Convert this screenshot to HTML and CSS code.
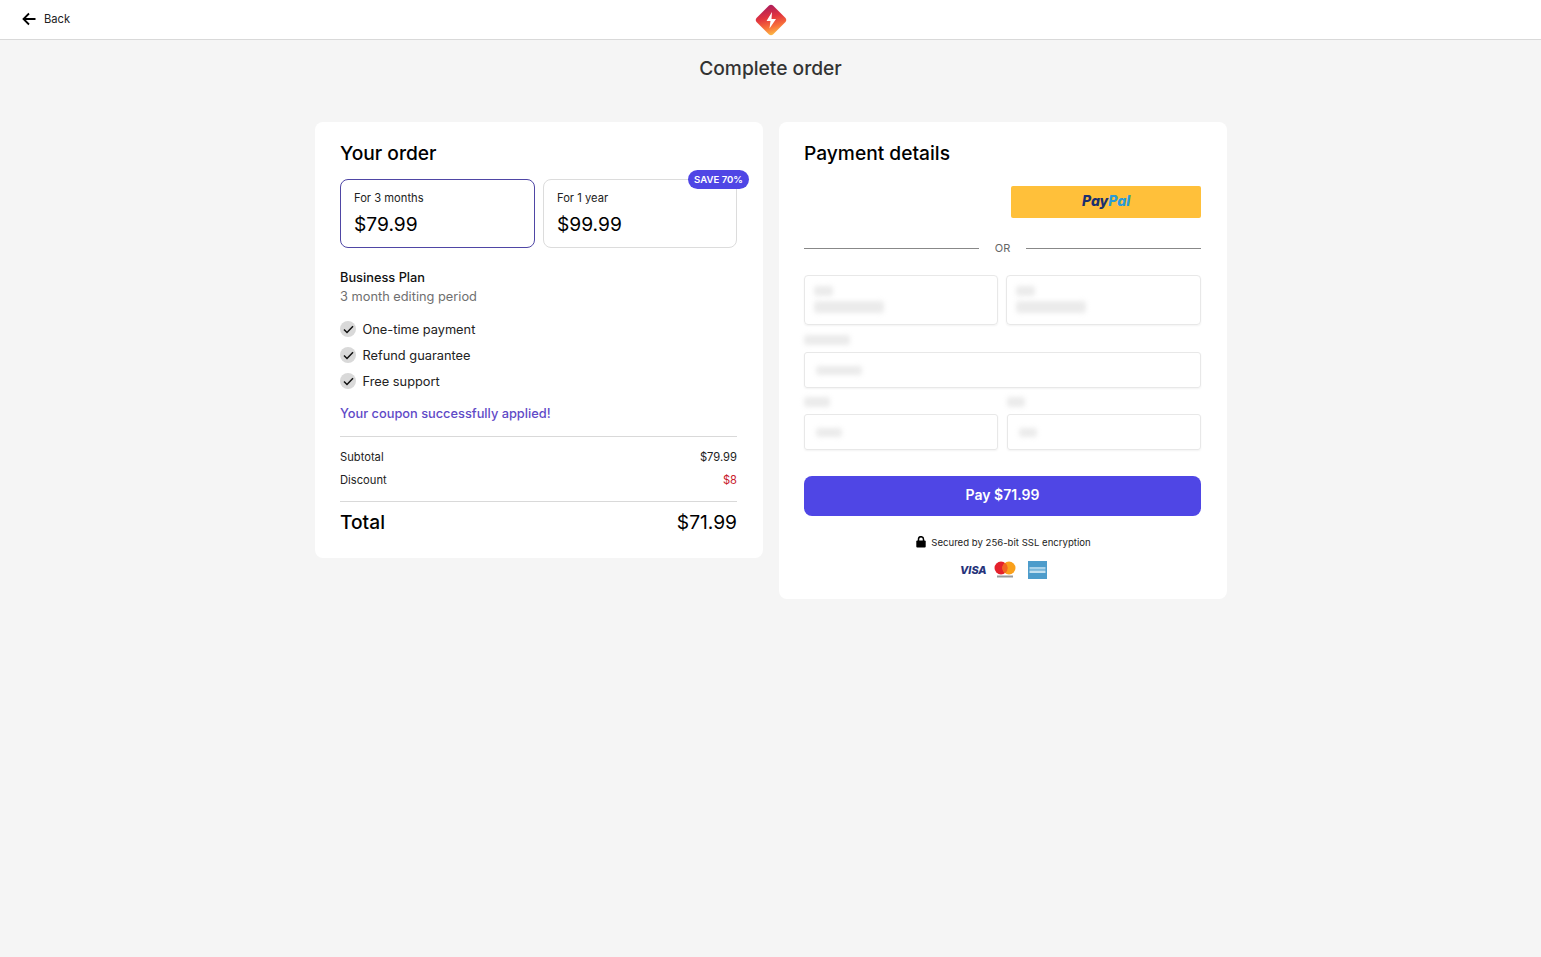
FILE: index.html
```html
<!DOCTYPE html>
<html lang="en">
  <head>
    <meta charset="UTF-8" />
    <meta name="viewport" content="width=device-width, initial-scale=1.0" />
    <title>Complete order</title>
    <link rel="stylesheet" href="styles.css">
  </head>
  <body>
    <header class="topbar">
      <a class="back" href="#">
        <svg width="14" height="14" viewBox="0 0 14 14" fill="none" stroke="#000" stroke-width="1.8">
          <path d="M13.5 7H1.5M7 1.5L1.5 7L7 12.5" />
        </svg>
        <span>Back</span>
      </a>
      <svg class="logo" width="32" height="32" viewBox="0 0 32 32">
        <defs>
          <linearGradient id="logoGrad" x1="0.35" y1="0" x2="0.6" y2="1">
            <stop offset="0" stop-color="#a81c5e" />
            <stop offset="0.4" stop-color="#e0323f" />
            <stop offset="0.72" stop-color="#f8703a" />
            <stop offset="1" stop-color="#fcc045" />
          </linearGradient>
        </defs>
        <path d="M14 1.500Q16 0 18 1.500L30.500 14Q32 16 30.500 18L18 30.500Q16 32 14 30.500L1.500 18Q0 16 1.500 14Z" fill="url(#logoGrad)" />
        <path d="M17 8L11.500 17H15.500L14.500 24.500L21 15H16.500Z" fill="#fff" />
      </svg>
    </header>

    <h1 class="page-title">Complete order</h1>

    <main class="columns">
      <section class="card">
        <h2>Your order</h2>
        <div class="plans">
          <div class="plan plan-active">
            <div class="plan-name">For 3 months</div>
            <div class="plan-price">$79.99</div>
          </div>
          <div class="plan">
            <div class="plan-name">For 1 year</div>
            <div class="plan-price">$99.99</div>
            <span class="badge">SAVE 70%</span>
          </div>
        </div>

        <div class="plan-title">Business Plan</div>
        <div class="plan-sub">3 month editing period</div>

        <ul class="features">
          <li><span class="check"><svg width="11" height="9" viewBox="0 0 11 9" fill="none" stroke="#111" stroke-width="1.5"><path d="M1 4.500L4 7.500L10 1.200" /></svg></span>One-time payment</li>
          <li><span class="check"><svg width="11" height="9" viewBox="0 0 11 9" fill="none" stroke="#111" stroke-width="1.5"><path d="M1 4.500L4 7.500L10 1.200" /></svg></span>Refund guarantee</li>
          <li><span class="check"><svg width="11" height="9" viewBox="0 0 11 9" fill="none" stroke="#111" stroke-width="1.5"><path d="M1 4.500L4 7.500L10 1.200" /></svg></span>Free support</li>
        </ul>

        <div class="coupon">Your coupon successfully applied!</div>

        <div class="summary">
          <div class="summary-row"><span>Subtotal</span><span>$79.99</span></div>
          <div class="summary-row"><span>Discount</span><span class="discount">$8</span></div>
        </div>
        <div class="total"><span>Total</span><span class="total-price">$71.99</span></div>
      </section>

      <section class="card">
        <h2>Payment details</h2>
        <div class="paypal-row">
          <button class="paypal" type="button"><span class="pp-pay">Pay</span><span class="pp-pal">Pal</span></button>
        </div>
        <div class="divider"><span>OR</span></div>

        <div class="pay-methods">
          <div class="method"><i class="blur b-19"></i><i class="blur b-70"></i></div>
          <div class="method"><i class="blur b-19"></i><i class="blur b-70"></i></div>
        </div>

        <i class="blur label-blur b-46"></i>
        <div class="field"><i class="blur b-46 field-blur"></i></div>

        <div class="field-pair">
          <div>
            <i class="blur label-blur b-26"></i>
            <div class="field"><i class="blur b-26 field-blur"></i></div>
          </div>
          <div>
            <i class="blur label-blur b-18"></i>
            <div class="field"><i class="blur b-18 field-blur"></i></div>
          </div>
        </div>

        <button class="pay-btn" type="button">Pay $71.99</button>

        <div class="secure">
          <svg width="10" height="12" viewBox="0 0 10 12"><path d="M2.500 5V3.200a2.500 2.500 0 0 1 5 0V5" fill="none" stroke="#000" stroke-width="1.500" /><rect x="0.300" y="4.500" width="9.400" height="7" rx="1" fill="#000" /></svg>
          <span>Secured by 256-bit SSL encryption</span>
        </div>

        <div class="cards-row">
          <span class="visa">VISA</span>
          <svg width="22" height="18" viewBox="0 0 22 18">
            <circle cx="7" cy="7" r="6.500" fill="#e4212b" />
            <circle cx="15" cy="7" r="6.500" fill="#f9a01b" />
            <path d="M11 1.700a6.500 6.500 0 0 1 0 10.600a6.500 6.500 0 0 1 0-10.600Z" fill="#f26522" />
            <rect x="3" y="14.500" width="16" height="2" fill="#999" />
          </svg>
          <svg class="amex" width="19" height="18" viewBox="0 0 19 18">
            <rect width="19" height="18" fill="#4d9ccb" />
            <rect x="1.500" y="6" width="16" height="2.500" fill="#a8d2ea" />
            <rect x="1.500" y="9.500" width="16" height="2.500" fill="#c3e0f0" />
          </svg>
        </div>
      </section>
    </main>
  </body>
</html>
```

FILE: styles.css
```css
/* General styles */
body {
  font-family: Inter, "Liberation Sans", sans-serif;
  background-color: #f5f5f5;
  color: #000;
  margin: 0;
  padding: 0;
  height: 957px;
  overflow: hidden;
}

.topbar {
  position: relative;
  height: 39px;
  background-color: white;
  border-bottom: 1px solid #d9d9d9;
  display: flex;
  justify-content: center;
  align-items: center;
}

.back {
  position: absolute;
  left: 22px;
  top: 12px;
  display: flex;
  align-items: center;
  gap: 8px;
  font-size: 11.200px;
  color: #222;
  text-decoration: none;
}

.page-title {
  margin: 16px 0 0;
  height: 66px;
  text-align: center;
  font-size: 19.200px;
  line-height: 24px;
  font-weight: 500;
  color: #333;
}

.columns {
  display: flex;
  justify-content: center;
  align-items: flex-start;
  gap: 16px;
  padding-left: 1px;
}

.card {
  width: 448px;
  box-sizing: border-box;
  background-color: white;
  border-radius: 8px;
  padding: 19px 26px 20px 25px;
}

h2 {
  margin: 0;
  font-size: 19.200px;
  line-height: 24px;
  font-weight: 500;
  color: #000;
}

.plans {
  display: grid;
  grid-template-columns: 195px 194px;
  gap: 8px;
  margin-top: 14px;
}

.plan {
  position: relative;
  height: 69px;
  box-sizing: border-box;
  border: 1px solid #dcdcdc;
  border-radius: 8px;
  padding: 11px 13px;
}

.plan-active {
  border-color: #4f46a5;
}

.plan-name {
  font-size: 11.200px;
  line-height: 14px;
  color: #222;
}

.plan-price {
  margin-top: 6px;
  font-size: 19.200px;
  line-height: 26px;
}

.badge {
  position: absolute;
  top: -10px;
  right: -13px;
  height: 19px;
  line-height: 19px;
  padding: 0 6px;
  border-radius: 10px;
  background-color: #4f46e5;
  color: white;
  font-size: 9.600px;
  font-weight: 600;
}

.plan-title {
  margin-top: 21px;
  font-size: 12.800px;
  line-height: 18px;
  font-weight: 500;
  color: #111;
}

.plan-sub {
  margin-top: 1px;
  font-size: 12.800px;
  line-height: 18px;
  color: #6f6f6f;
}

.features {
  list-style: none;
  margin: 10px 0 0;
  padding: 0;
}

.features li {
  display: flex;
  align-items: center;
  gap: 6.500px;
  height: 26px;
  font-size: 12.800px;
  color: #222;
}

.check {
  width: 16px;
  height: 16px;
  border-radius: 50%;
  background-color: #d9d9d9;
  display: flex;
  align-items: center;
  justify-content: center;
}

.coupon {
  margin-top: 11px;
  font-size: 12.800px;
  line-height: 18px;
  font-weight: 500;
  color: #5f4ac7;
}

.summary {
  margin-top: 13px;
  border-top: 1px solid #d9d9d9;
  border-bottom: 1px solid #d9d9d9;
  padding: 9px 0 9px;
}

.summary-row {
  display: flex;
  justify-content: space-between;
  height: 23px;
  line-height: 23px;
  font-size: 11.200px;
  color: #222;
}

.discount {
  color: #c8202c;
}

.total {
  display: flex;
  justify-content: space-between;
  margin-top: 7px;
  margin-bottom: 3px;
  font-size: 19.200px;
  line-height: 26px;
  font-weight: 500;
}

.total-price {
  font-weight: 400;
}

.paypal-row {
  display: flex;
  justify-content: flex-end;
  margin-top: 21px;
}

.paypal {
  width: 190px;
  height: 32px;
  border: none;
  border-radius: 2px;
  background-color: #ffc03a;
  font-family: Inter, sans-serif;
  font-size: 14px;
  line-height: 30px;
  font-weight: 800;
  font-style: italic;
  padding: 0 0 2px;
}

.pp-pay {
  color: #1b2f6e;
}

.pp-pal {
  color: #2a9bd8;
}

.divider {
  display: flex;
  align-items: center;
  gap: 16px;
  margin-top: 22px;
  height: 16px;
  font-size: 11px;
  color: #666;
}

.divider::before,
.divider::after {
  content: "";
  flex: 1;
  height: 1px;
  background-color: #888;
}

.pay-methods {
  display: grid;
  grid-template-columns: 194px 195px;
  gap: 8px;
  margin-top: 19px;
}

.method {
  height: 50px;
  box-sizing: border-box;
  border: 1px solid #e8e8e8;
  border-radius: 4px;
  padding: 10px 9px;
  box-shadow: 0 1px 2px rgba(0, 0, 0, 0.05);
}

.blur {
  display: block;
  height: 10px;
  border-radius: 3px;
  background-color: #ebebeb;
  filter: blur(2.500px);
}

.method .blur + .blur {
  margin-top: 5px;
  height: 12px;
}

.b-19 { width: 19px; }
.b-70 { width: 70px; }
.b-46 { width: 46px; }
.b-26 { width: 26px; }
.b-18 { width: 18px; }

.label-blur {
  margin-top: 10px;
  margin-bottom: 7px;
}

.field {
  height: 36px;
  box-sizing: border-box;
  border: 1px solid #e8e8e8;
  border-radius: 3px;
  padding: 13px 11px;
  box-shadow: 0 1px 2px rgba(0, 0, 0, 0.05);
}

.field-blur {
  height: 9px;
}

.field-pair {
  display: grid;
  grid-template-columns: 194px 194px;
  gap: 9px;
}

.field-pair .label-blur {
  margin-top: 9px;
}

.pay-btn {
  display: block;
  width: 100%;
  height: 40px;
  margin-top: 26px;
  padding: 0 0 3px;
  border: none;
  border-radius: 8px;
  background-color: #4f46e5;
  color: white;
  font-family: inherit;
  font-size: 14px;
  font-weight: 600;
}

.secure {
  display: flex;
  justify-content: center;
  align-items: center;
  gap: 5px;
  margin-top: 19px;
  padding-left: 2px;
  height: 14px;
  font-size: 9.600px;
  color: #222;
}

.cards-row {
  display: flex;
  justify-content: center;
  align-items: center;
  gap: 9px;
  margin-top: 12px;
  padding-left: 2px;
  height: 18px;
}

.visa {
  width: 25px;
  font-size: 10.800px;
  font-weight: 800;
  font-style: italic;
  color: #26337a;
}

.amex {
  margin-left: 3px;
}
```
